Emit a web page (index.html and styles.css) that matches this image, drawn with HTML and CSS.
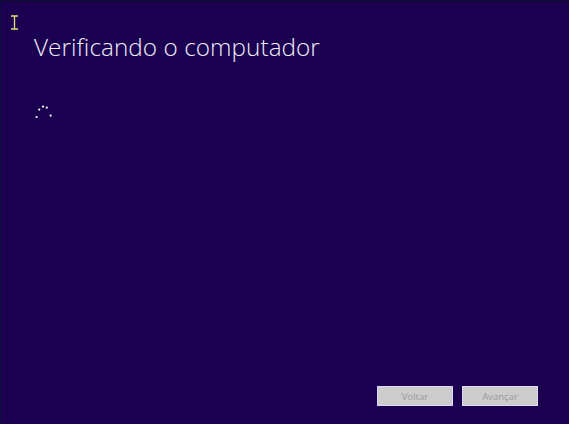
FILE: index.html
```html
<!DOCTYPE html>
<html lang="pt-BR">
<head>
  <meta charset="UTF-8" />
  <title>Verificando o computador</title>
  <link rel="stylesheet" href="styles.css">
</head>
<body>
  <div class="setup-window">
    <div class="setup-cursor">
      <svg width="9" height="15" viewBox="0 0 9 15">
        <path d="M1 1 H8 M1 14 H8 M4.5 1 V14" stroke="#e8e070" stroke-width="1.3" fill="none" />
      </svg>
    </div>
    <div class="setup-body">
      <h1 class="setup-title">Verificando o computador</h1>
      <div class="setup-spinner">
        <svg width="18" height="16" viewBox="0 0 18 16">
          <circle cx="1.6" cy="13" r="1.1" fill="#fff" />
          <circle cx="4.2" cy="5.6" r="1.1" fill="#fff" />
          <circle cx="8" cy="2.6" r="1.1" fill="#fff" />
          <circle cx="11.8" cy="3.6" r="1.1" fill="#fff" />
          <circle cx="15.6" cy="11.6" r="1.1" fill="#fff" />
        </svg>
      </div>
    </div>
    <div class="setup-footer">
      <button class="setup-button" disabled>Voltar</button>
      <button class="setup-button" disabled>Avançar</button>
    </div>
  </div>
</body>
</html>
```

FILE: styles.css
```css
* {
  box-sizing: border-box;
  margin: 0;
  padding: 0;
  font-family: 'Segoe UI', 'Open Sans', sans-serif;
}
html, body {
  width: 569px;
  height: 424px;
  background: #1a0050;
  overflow: hidden;
}
.setup-window {
  position: relative;
  width: 569px;
  height: 424px;
  display: flex;
  flex-direction: column;
  background: #1b0052;
  border-top: 2px solid #12093a;
  border-left: 2px solid #140848;
}
.setup-cursor {
  position: absolute;
  top: 11px;
  left: 8px;
}
.setup-body {
  flex: 1;
  padding: 29px 0 0 32px;
}
.setup-title {
  font-weight: 300;
  font-size: 24.3px;
  line-height: 32px;
  color: #f0eef8;
  letter-spacing: 0.05px;
}
.setup-spinner {
  margin-top: 40px;
  margin-left: 1px;
  height: 16px;
}
.setup-footer {
  display: flex;
  justify-content: flex-end;
  gap: 9px;
  padding: 0 31px 18px 0;
}
.setup-button {
  width: 76px;
  height: 20px;
  background: #cccccc;
  border: 1px solid #ddd6f4;
  color: #9a9a9a;
  font-size: 9.5px;
  font-family: 'Segoe UI', 'Open Sans', sans-serif;
}
```
